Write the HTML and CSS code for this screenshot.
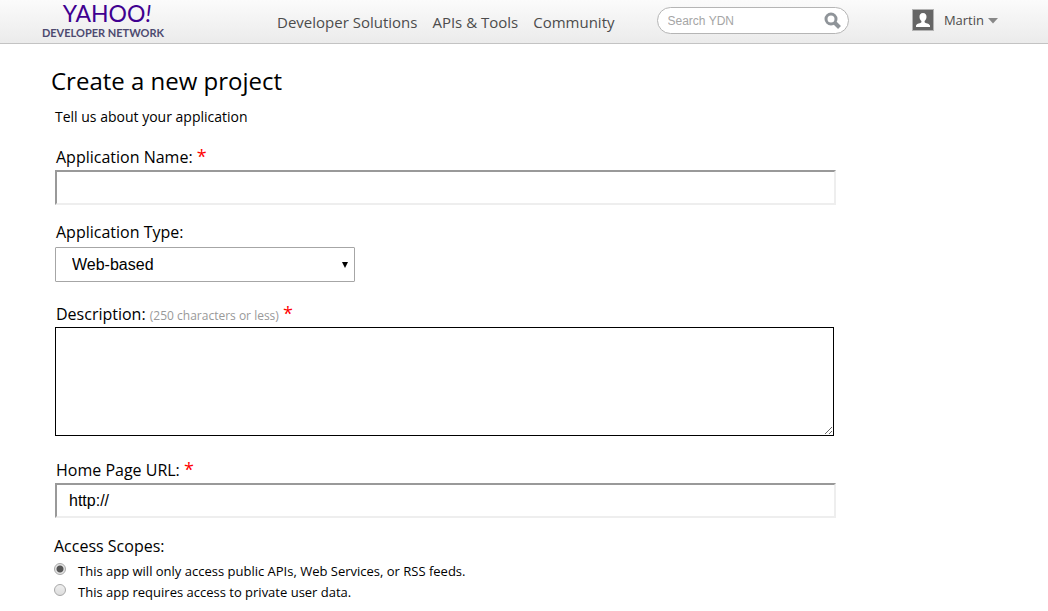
FILE: index.html
```html
<!DOCTYPE html>
<html lang="en">
<head>
<meta charset="utf-8">
<meta name="viewport" content="width=device-width, initial-scale=1">
<title>Create a new project - Yahoo Developer Network</title>
<link rel="stylesheet" href="styles.css">
</head>
<body>
<header class="header">
  <a class="logo" href="#">
    <span class="logo-name">YAHOO<i>!</i></span>
    <span class="logo-sub">DEVELOPER NETWORK</span>
  </a>
  <nav class="nav">
    <a href="#">Developer Solutions</a>
    <a href="#">APIs &amp; Tools</a>
    <a href="#">Community</a>
  </nav>
  <form class="search" role="search">
    <input class="search-input" type="search" placeholder="Search YDN" aria-label="Search YDN">
    <button class="search-button" type="submit" aria-label="Search">
      <svg width="18" height="18" viewBox="0 0 18 18" fill="none" stroke="#8f9499">
        <circle cx="7" cy="7" r="5" stroke-width="3"/>
        <path d="M11 11l4.500 4.500" stroke-width="4"/>
      </svg>
    </button>
  </form>
  <button class="user" type="button">
    <svg width="22" height="22" viewBox="0 0 22 22">
      <rect x=".5" y=".5" width="21" height="21" fill="#666" stroke="#b4b4b4"/>
      <path d="M11 4C8.600 4 7.300 5.700 7.500 8c.1 1.700.8 3 1.900 3.900v1.300c-.5 1-4.900 1.200-5.400 3.400V18h14v-1.400c-.5-2.200-4.900-2.400-5.400-3.400v-1.300c1.100-.9 1.800-2.200 1.900-3.900C14.700 5.700 13.400 4 11 4z" fill="#fff"/>
    </svg>
    <span>Martin</span>
    <svg class="caret" width="10" height="6" viewBox="0 0 10 6"><path d="M0 0h10L5 5.500z" fill="#888"/></svg>
  </button>
</header>
<main class="main">
  <h1 class="title">Create a new project</h1>
  <p class="intro">Tell us about your application</p>
  <form class="form">
    <div class="field">
      <label class="label" for="name">Application Name: <span class="required">*</span></label>
      <input class="text" id="name" type="text" required>
    </div>
    <div class="field field-type">
      <label class="label" for="type">Application Type:</label>
      <select class="select" id="type"><option>Web-based</option></select>
    </div>
    <div class="field">
      <label class="label" for="description">Description: <span class="hint">(250 characters or less)</span> <span class="required">*</span></label>
      <textarea class="area" id="description" maxlength="250" required></textarea>
    </div>
    <div class="field field-url">
      <label class="label" for="url">Home Page URL: <span class="required">*</span></label>
      <input class="text" id="url" type="text" value="http://" required>
    </div>
    <fieldset class="scopes">
      <legend class="legend">Access Scopes:</legend>
      <label class="scope"><input class="radio" type="radio" name="scope" checked>This app will only access public APIs, Web Services, or RSS feeds.</label>
      <label class="scope"><input class="radio" type="radio" name="scope">This app requires access to private user data.</label>
    </fieldset>
  </form>
</main>
</body>
</html>
```
FILE: styles.css
```css
* {
  box-sizing: border-box;
}

body {
  margin: 0;
  background: #fff;
  color: #000;
  font-family: "Open Sans", sans-serif;
}

.header {
  display: flex;
  align-items: center;
  height: 44px;
  padding: 0 50px 0 39px;
  border-bottom: 1px solid #c3c3c3;
  background: linear-gradient(#fbfbfb, #ebebeb);
}

.logo {
  display: flex;
  flex-direction: column;
  align-items: center;
  width: 128px;
  padding-bottom: 4px;
  text-decoration: none;
  white-space: nowrap;
  font-family: Lato, sans-serif;
}

.logo-name {
  padding-left: 8px;
  color: #400090;
  font-size: 23px;
  line-height: 27px;
}

.logo-sub {
  color: #4d4a70;
  font-size: 11px;
  font-weight: 700;
  line-height: 12px;
}

.nav {
  display: flex;
  gap: 15px;
  margin-left: 110px;
}

.nav a {
  color: #4c4c4c;
  font-size: 15px;
  line-height: 24px;
  text-decoration: none;
  white-space: nowrap;
}

.search {
  display: flex;
  align-items: center;
  width: 192px;
  height: 27px;
  margin: 0 0 2px 42px;
  padding: 0 6px 0 10px;
  border: 1px solid #b5b5b5;
  border-radius: 14px;
  background: #fff;
}

.search-input {
  flex: 1;
  min-width: 0;
  padding: 0;
  border: 0;
  outline: 0;
  background: none;
  font: 12px "Liberation Sans", Arial, sans-serif;
}

.search-input::placeholder {
  color: #a5a5a5;
}

.search-button,
.user {
  display: flex;
  align-items: center;
  padding: 0;
  border: 0;
  background: none;
}

.user {
  gap: 10px;
  margin: 0 0 4px auto;
  color: #4c4c4c;
  font: 13px "Open Sans", sans-serif;
}

.caret {
  margin: 2px 0 0 -6px;
}

.main {
  padding: 21px 55px 8px;
}

.title {
  margin: 0 0 9px -4px;
  font-size: 24px;
  font-weight: 400;
  line-height: 32px;
}

.intro {
  margin: 0 0 18px;
  font-size: 14px;
  line-height: 22px;
}

.form {
  max-width: 781px;
}

.field {
  display: flex;
  flex-direction: column;
  align-items: flex-start;
  margin-bottom: 23px;
}

.field:first-child {
  margin-bottom: 16px;
}

.field-type {
  gap: 2px;
  margin-bottom: 21px;
}

.field-url {
  margin-bottom: 16px;
}

.label {
  padding: 0 0 2px 1px;
  font-size: 16px;
  line-height: 22px;
}

.hint {
  color: #999;
  font-size: 12px;
  line-height: 1;
}

.required {
  color: #f00;
  font-size: 18px;
  line-height: 1;
}

.text,
.select,
.area {
  background: #fff;
  color: #000;
  font: 16px "Liberation Sans", Arial, sans-serif;
}

.text {
  width: 100%;
  height: 35px;
  padding: 0 12px;
  border: 2px solid;
  border-color: #999 #eee #eee #999;
}

.select {
  width: 300px;
  max-width: 100%;
  height: 35px;
  padding: 0 16px;
  border: 1px solid #a6a6a6;
  border-radius: 1px;
  appearance: none;
  background: #fff url("data:image/svg+xml,%3Csvg xmlns='http://www.w3.org/2000/svg' width='6' height='6'%3E%3Cpath d='M0 0h6L3 6z'/%3E%3C/svg%3E") no-repeat right 6px center;
}

.area {
  width: calc(100% - 2px);
  height: 109px;
  padding: 8px 12px;
  border: 1px solid #000;
  border-radius: 0;
  resize: both;
}

.scopes {
  margin: 0 0 0 -1px;
  padding: 0;
  border: 0;
}

.legend {
  margin-bottom: 3px;
  padding: 0;
  font-size: 16px;
  line-height: 24px;
}

.scope {
  display: flex;
  gap: 12px;
  font-size: 13px;
  line-height: 21px;
}

.radio {
  flex: none;
  width: 12px;
  height: 12px;
  margin: 2px 0 0;
  border: 1px solid #a8a8a8;
  border-radius: 50%;
  appearance: none;
  background: linear-gradient(#eee, #ddd);
}

.radio:checked {
  background: radial-gradient(circle, #555 0 3px, #e4e4e4 4px);
}
```
